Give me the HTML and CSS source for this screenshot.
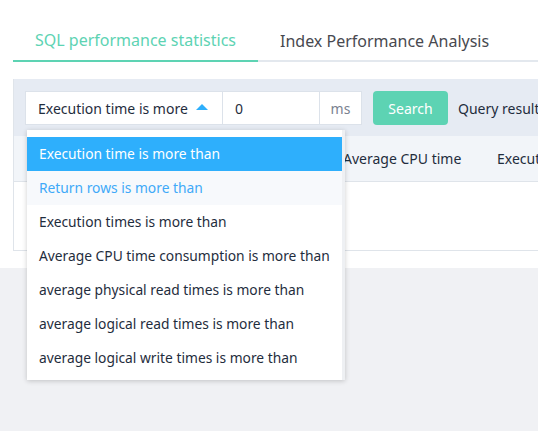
FILE: index.html
```html
<!DOCTYPE html>
<html>
<head>
<meta charset="utf-8">
<link rel="stylesheet" href="styles.css">
</head>
<body>
<div class="page">
  <div class="top">
    <div class="tabs">
      <div class="tab active">SQL performance statistics</div>
      <div class="tab">Index Performance Analysis</div>
    </div>
    <div class="card">
      <div class="toolbar">
        <div class="group">
          <div class="select">
            <span class="select-text">Execution time is more</span>
            <span class="caret"></span>
          </div>
          <div class="input">0</div>
          <div class="addon">ms</div>
        </div>
        <button class="btn">Search</button>
        <span class="result">Query results: 0</span>
      </div>
      <div class="thead">
        <div class="th th1">SQL statement</div>
        <div class="th th2">Execution time</div>
        <div class="th th3">Average CPU time</div>
        <div class="th th4">Execution times</div>
      </div>
      <div class="tbody"></div>
    </div>
    <div class="dropdown">
      <div class="list">
        <div class="item selected">Execution time is more than</div>
        <div class="item hover">Return rows is more than</div>
        <div class="item">Execution times is more than</div>
        <div class="item">Average CPU time consumption is more than</div>
        <div class="item">average physical read times is more than</div>
        <div class="item">average logical read times is more than</div>
        <div class="item">average logical write times is more than</div>
      </div>
      <div class="track"></div>
    </div>
  </div>
  <div class="bottom"></div>
</div>
</body>
</html>
```
FILE: styles.css
```css
html, body {
  margin: 0;
  padding: 0;
  width: 538px;
  height: 431px;
  overflow: hidden;
  font-family: "Noto Sans", "Open Sans", sans-serif;
  background: #f0f1f4;
}
.page {
  display: flex;
  flex-direction: column;
  height: 431px;
}
.top {
  position: relative;
  background: #fff;
  padding: 0 0 18px 13px;
  height: 250px;
}
.tabs {
  display: flex;
  height: 60px;
  border-bottom: 2px solid #e3e8ee;
  align-items: stretch;
  box-sizing: content-box;
}
.tab {
  font-size: 16px;
  color: #48494f;
  padding: 0 22px;
  display: flex;
  align-items: center;
  padding-top: 19px;
  box-sizing: border-box;
  margin-bottom: -2px;
  white-space: nowrap;
}
.tab.active {
  color: #5dd3b3;
  border-bottom: 2px solid #5dd3b3;
}
.card {
  margin-top: 17px;
  border-left: 1px solid #dfe4ea;
  border-bottom: 1px solid #dfe4ea;
  overflow: hidden;
}
.toolbar {
  background: #e6ebf3;
  padding: 12px 0 11px 11px;
  display: flex;
  align-items: center;
  white-space: nowrap;
}
.group {
  flex: none;
  display: flex;
  height: 34px;
  background: #fff;
  border: 1px solid #dce2ea;
  box-sizing: border-box;
}
.select {
  flex: none;
  width: 197px;
  display: flex;
  align-items: center;
  justify-content: space-between;
  padding: 0 14px 0 12px;
  box-sizing: border-box;
  font-size: 14px;
  color: #1f2d3d;
  border-right: 1px solid #dce2ea;
}
.caret {
  width: 0;
  height: 0;
  border-left: 6px solid transparent;
  border-right: 6px solid transparent;
  border-bottom: 6px solid #2eaffc;
  margin-bottom: 2px;
}
.input {
  flex: none;
  width: 97px;
  display: flex;
  align-items: center;
  padding-left: 12px;
  box-sizing: border-box;
  font-size: 14px;
  color: #1f2d3d;
  border-right: 1px solid #dce2ea;
}
.addon {
  flex: none;
  width: 41px;
  display: flex;
  align-items: center;
  justify-content: center;
  font-size: 14px;
  color: #7a8290;
}
.btn {
  flex: none;
  margin-left: 11px;
  width: 75px;
  height: 34px;
  border: none;
  border-radius: 4px;
  background: #5dd3b3;
  color: #fff;
  font-family: inherit;
  font-size: 14px;
  padding: 0;
}
.result {
  flex: none;
  margin-left: 10px;
  font-size: 14px;
  color: #1f2d3d;
}
.thead {
  display: flex;
  height: 45px;
  background: #f2f5f9;
  border-bottom: 1px solid #dfe4ea;
  white-space: nowrap;
  align-items: center;
}
.th {
  font-size: 14px;
  color: #1f2d3d;
  flex: none;
}
.th1 { width: 160px; padding-left: 14px; }
.th2 { width: 155px; }
.th3 { width: 154px; }
.th4 { width: 120px; }
.tbody {
  height: 68px;
  background: #fff;
}
.dropdown {
  position: absolute;
  left: 27px;
  top: 130px;
  width: 318px;
  background: #fff;
  box-shadow: 0 1px 5px rgba(0, 0, 0, 0.2);
  display: flex;
  padding: 7px 0 5px;
}
.list {
  flex: 1;
}
.track {
  width: 4px;
  background: #eef0f3;
  margin: -7px 0 -5px;
}
.item {
  height: 34px;
  line-height: 34px;
  padding: 0 12px;
  font-size: 13.8px;
  color: #1f2d3d;
  white-space: nowrap;
}
.item.selected {
  background: #2eaffc;
  color: #fff;
}
.item.hover {
  background: #f7f9fc;
  color: #40a9f8;
}
.bottom {
  flex: 1;
  background: #f0f1f4;
}
```
